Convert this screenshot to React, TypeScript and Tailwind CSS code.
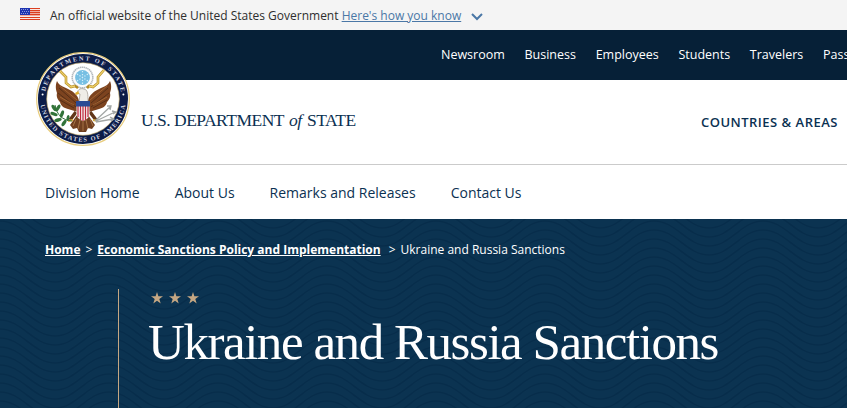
import React from "react";

const topLinks = ["Newsroom", "Business", "Employees", "Students", "Travelers", "Passports"];
const divisionLinks = ["Division Home", "About Us", "Remarks and Releases", "Contact Us"];
const waveRows = [0, 9, 18, 27, 36, 45, 54, 63, 72, 81, 90, 99, 108, 117, 126, 135, 144, 153, 162, 171, 180, 189, 198, 207, 216];

function Flag() {
  return (
    <svg width="20" height="12" viewBox="0 0 20 12" className="mb-[2px] shrink-0">
      <rect width="20" height="12" fill="#f8e9e5" />
      <path d="M0 .5H20M0 2.5H20M0 4.5H20M0 6.5H20M0 9.5H20M0 11.5H20" stroke="#db3e1f" strokeWidth="1" />
      <path d="M10 3.5H20M10 5.5H20M0 7.5H20" stroke="#eeaa9d" />
      <rect width="10" height="7" fill="#1e33b1" />
      <path d="M1 1.5H9M2 3.5H9M1 5.5H9" stroke="#8b98dc" strokeDasharray="1 1" />
    </svg>
  );
}

function Seal() {
  return (
    <svg width="96" height="96" viewBox="0 0 96 96">
      <defs>
        <path id="sealTop" d="M9.5 48a38.5 38.5 0 0 1 77 0" />
        <path id="sealBottom" d="M5.2 48a42.8 42.8 0 0 0 85.6 0" />
      </defs>
      <circle cx="48" cy="48" r="46.3" fill="#fff" stroke="#e8cc7c" strokeWidth="1.2" />
      <circle cx="48" cy="48" r="45" fill="#0c1c48" />
      <circle cx="48" cy="48" r="36.3" fill="#fff" stroke="#c9ab62" strokeWidth=".6" />
      <g fill="#d5d8e1" fontFamily="Liberation Serif, serif" fontSize="6.3" fontWeight="bold">
        <text textLength="106"><textPath href="#sealTop" startOffset="7.5">DEPARTMENT OF STATE</textPath></text>
        <text textLength="122"><textPath href="#sealBottom" startOffset="6">UNITED STATES OF AMERICA</textPath></text>
      </g>
      <circle cx="7.6" cy="43.5" r="1" fill="#fff" />
      <circle cx="88.4" cy="43.5" r="1" fill="#fff" />

      {/* glory and stars */}
      <circle cx="47.5" cy="26.5" r="10.3" fill="#fbfcfc" stroke="#b3b8bd" strokeWidth="1.6" strokeDasharray="1.4 .5" />
      <circle cx="47.5" cy="26.5" r="7.4" fill="#77bfe3" />
      <path d="M47.5 20v13M42 23l11 7M42 30l11-7" stroke="#d7eff9" strokeWidth="1.2" strokeDasharray="1.3 1.6" />
      {/* wings */}
      <path d="M44 50C43 44 38 40 31 37c-5-2-8-4-9-7-2 5-1 9 0 12-1 4 1 7 3 9 1 4 4 6 8 7l10 3zM53 50c1-6 6-10 13-13 5-2 8-4 9-7 2 5 1 9 0 12 1 4-1 7-3 9-1 4-4 6-8 7l-10 3z" fill="#7c431f" />
      <path d="M24 37l17 15M23 42l18 14M25 49l14 8M73 37L56 52M74 42L56 56M72 49l-14 8" stroke="#4b2914" strokeWidth=".8" />
      <path d="M25 35l17 14M25 46l14 8M72 35L55 49M72 46l-14 8" stroke="#b1723b" strokeWidth=".7" />
      {/* scroll */}
      <path d="M25 20l6 6v6l5 4 4-1 3 2M69 19l-6 7v6l-5 4-4-1-2 2" fill="none" stroke="#b48a22" strokeWidth="2.6" />
      <path d="M25 20l6 6v6l5 4 4-1M69 19l-6 7v6l-5 4-4-1" fill="none" stroke="#ecd06a" strokeWidth="1.3" />
      {/* tail and legs */}
      <path d="M42 64L35 74l3 4 4-1 2 4h7l2-4 4 1 3-4-7-10z" fill="#714020" />
      <path d="M41 68l-3 7M45 69l-2 9M48 70v10M51 69l2 9M55 68l3 7" stroke="#bd8a58" strokeWidth=".7" />
      <path d="M41 61l-6 8M55 61l6 8" stroke="#623719" strokeWidth="3.5" />
      <path d="M33 70l5-1M58 69l5 1" stroke="#dcb246" strokeWidth="2" />
      {/* olive branch and arrows */}
      <path d="M37 70C27 69 22 64 20 54" fill="none" stroke="#32713b" strokeWidth="1" />
      <g fill="#327339">
        <ellipse cx="19" cy="57" rx="1.7" ry="3.6" transform="rotate(-35 19 57)" />
        <ellipse cx="23" cy="57" rx="1.7" ry="3.8" transform="rotate(30 23 57)" />
        <ellipse cx="19" cy="63" rx="1.7" ry="3.8" transform="rotate(-70 19 63)" />
        <ellipse cx="27" cy="63" rx="1.7" ry="3.8" transform="rotate(20 27 63)" />
        <ellipse cx="23" cy="69" rx="1.7" ry="3.8" transform="rotate(75 23 69)" />
        <ellipse cx="29" cy="72" rx="1.7" ry="3.6" transform="rotate(35 29 72)" />
        <ellipse cx="33" cy="67" rx="1.5" ry="3" transform="rotate(10 33 67)" />
      </g>
      <path d="M60 70l15-14M61 70l19-9M61 71l17-3M72 55l4 0-1 4M77 60l4 1-3 2M75 66l4 2-3 2" fill="none" stroke="#a3a7a5" strokeWidth="1.3" />
      {/* head and neck */}
      <path d="M44 51l1-8-3-1c1-4 4-5 7-4 4 1 4 5 4 13z" fill="#efede8" stroke="#8c8379" strokeWidth=".6" />
      <path d="M43.5 40l-3.5 2 1 2 3-1z" fill="#e1af2d" />
      {/* shield */}
      <path d="M41.5 51h13v13q-1 4-6.5 6-5.5-2-6.5-6z" fill="#f3eeee" />
      <path d="M43 55v11M45.5 55v14M48 55v15M50.5 55v14M53 55v11" stroke="#bf293c" strokeWidth="1.2" />
      <path d="M41 50h14v5.5H41z" fill="#2b4a94" />
    </svg>
  );
}

function WavePattern() {
  return (
    <svg className="absolute inset-0 h-full w-full" aria-hidden="true">
      <defs>
        <pattern id="waves" width="109" height="189" patternUnits="userSpaceOnUse" x="-27">
          {waveRows.map((y) => (
            <path key={y} d={`M-27 ${y}C-5 ${y} 5 ${y - 25} 27 ${y - 25}S60 ${y} 82 ${y}S114 ${y - 25} 136 ${y - 25}`} fill="none" stroke="#072d4b" strokeWidth="1.6" />
          ))}
        </pattern>
      </defs>
      <rect width="100%" height="100%" fill="url(#waves)" />
    </svg>
  );
}

function Star() {
  return (
    <svg width="12" height="12" viewBox="0 0 12 12">
      <path d="M6 0l1.4 4.2H12L8.3 6.9 9.7 11.5 6 8.7 2.3 11.5 3.7 6.9 0 4.2h4.6z" fill="#c5a783" />
    </svg>
  );
}

export default function App() {
  return (
    <div className="h-[408px] w-[847px] overflow-hidden bg-white font-['Open_Sans',sans-serif] text-[#0b3152]">
      <div className="flex h-[30px] items-center bg-[#f4f4f4] pl-5 text-[12px] text-[#2e2e2e]">
        <Flag />
        <p className="ml-[10px] whitespace-nowrap pt-[2px]">
          An official website of the United States Government{" "}
          <a href="#" className="text-[#4a77a6] underline underline-offset-1">Here's how you know</a>
        </p>
        <svg width="12" height="8" viewBox="0 0 12 8" className="ml-[10px] mt-[3px]">
          <path d="M1 1l5 5 5-5" fill="none" stroke="#4a77a6" strokeWidth="2" />
        </svg>
      </div>

      <header className="relative">
        <nav className="flex h-[50px] gap-[19.7px] whitespace-nowrap bg-[#062037] pl-[441px] pt-4 text-[12.5px] leading-[18px] text-white">
          {topLinks.map((link) => <a href="#" key={link}>{link}</a>)}
        </nav>
        <div className="flex h-[85px] justify-between border-b border-[#cbcbcb] pl-[141px] pr-[9px]">
          <p className="mt-[27px] whitespace-nowrap font-['Liberation_Serif',serif] text-[17.5px] leading-[26px] tracking-[-0.5px]">
            U.S. DEPARTMENT <i className="mx-[1.5px]">of</i> STATE
          </p>
          <a href="#" className="mt-[33px] whitespace-nowrap text-[13px] font-semibold leading-[18px] tracking-[0.5px]">COUNTRIES &amp; AREAS</a>
        </div>
        <div className="absolute left-[35px] top-[21px]"><Seal /></div>
      </header>

      <nav className="flex h-[54px] items-center gap-[35px] pl-[45px] text-[14px]">
        {divisionLinks.map((link) => <a href="#" key={link}>{link}</a>)}
      </nav>

      <main className="relative h-[189px] bg-[#0b3351] text-white">
        <WavePattern />
        <div className="relative pt-[22px]">
          <div className="flex whitespace-nowrap pl-[45px] text-[12px] leading-[18px]">
            <a href="#" className="font-bold underline underline-offset-1">Home</a>
            <span className="mx-[5px]">&gt;</span>
            <a href="#" className="font-bold underline underline-offset-1">Economic Sanctions Policy and Implementation</a>
            <span className="ml-2 mr-[5px]">&gt;</span>
            <span>Ukraine and Russia Sanctions</span>
          </div>
          <div className="ml-[118px] mt-[30px] h-[119px] border-l border-[#c5a783] pl-[29px]">
            <div className="flex gap-[6px] pl-[3px] pt-[3px]"><Star /><Star /><Star /></div>
            <h1 className="mt-[8px] whitespace-nowrap font-['Liberation_Serif',serif] text-[51px] leading-[60px] tracking-[-1.45px]">
              Ukraine and Russia Sanctions
            </h1>
          </div>
        </div>
      </main>
    </div>
  );
}
